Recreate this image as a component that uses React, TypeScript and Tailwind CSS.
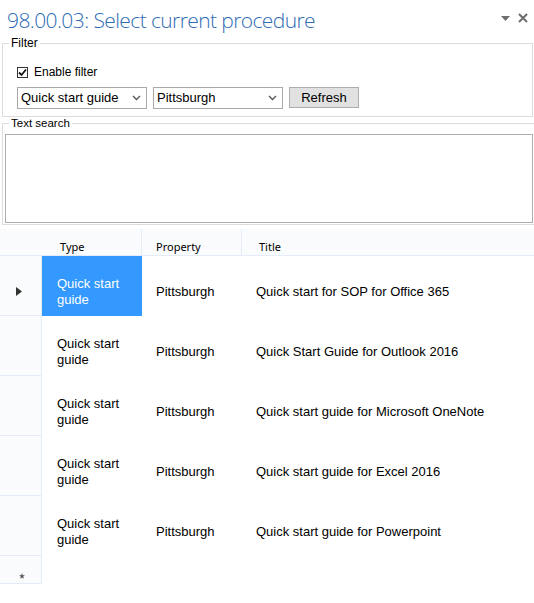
import React from 'react';

const rows = [
  { type: 'Quick start guide', property: 'Pittsburgh', title: 'Quick start for SOP for Office 365' },
  { type: 'Quick start guide', property: 'Pittsburgh', title: 'Quick Start Guide for Outlook 2016' },
  { type: 'Quick start guide', property: 'Pittsburgh', title: 'Quick start guide for Microsoft OneNote' },
  { type: 'Quick start guide', property: 'Pittsburgh', title: 'Quick start guide for Excel 2016' },
  { type: 'Quick start guide', property: 'Pittsburgh', title: 'Quick start guide for Powerpoint' },
];

function Chevron() {
  return (
    <svg width="9" height="6" viewBox="0 0 9 6" className="shrink-0">
      <path d="M1 1 L4.5 4.5 L8 1" fill="none" stroke="#555" strokeWidth="1.3" />
    </svg>
  );
}

function Combo({ value, width }: { value: string; width: string }) {
  return (
    <div className={`${width} h-[22px] border border-[#a9a9a9] bg-white flex items-center justify-between pl-[3px] pr-[5px]`}>
      <span className="text-[13px] text-black">{value}</span>
      <Chevron />
    </div>
  );
}

export default function App() {
  return (
    <div className="w-[534px] h-[603px] bg-white overflow-hidden font-['Liberation_Sans',Arial,sans-serif]">
      {/* title bar */}
      <div className="h-[37px] flex items-start justify-between pl-[7px] pr-[6px] pt-[6px]">
        <h1 className="text-[21px] leading-[28px] text-[#2f6cb4] font-['Open_Sans',sans-serif] font-light tracking-[-0.6px]">
          98.00.03: Select current procedure
        </h1>
        <div className="flex items-center gap-[8px] pt-[7px]">
          <svg width="9" height="5" viewBox="0 0 9 5">
            <path d="M0 0 H9 L4.5 5 Z" fill="#6e6e6e" />
          </svg>
          <svg width="10" height="10" viewBox="0 0 10 10">
            <path d="M1 1 L9 9 M9 1 L1 9" stroke="#6e6e6e" strokeWidth="2" />
          </svg>
        </div>
      </div>

      {/* filter group */}
      <fieldset className="ml-[2px] mr-[1px] h-[80px] border border-[#dcdcdc] p-0">
        <legend className="ml-[6px] px-[2px] text-[12px] leading-[12px] text-black">Filter</legend>
        <div className="pl-[14px] pt-[16px]">
          <div className="flex items-center gap-[6px] h-[14px]">
            <div className="w-[11px] h-[11px] border border-[#333] bg-white flex items-center justify-center">
              <svg width="9" height="9" viewBox="0 0 9 9">
                <path d="M1 4.5 L3.5 7 L8 1.5" fill="none" stroke="#111" strokeWidth="1.8" />
              </svg>
            </div>
            <span className="text-[12px] text-black">Enable filter</span>
          </div>
          <div className="flex items-start mt-[8px] gap-[6px]">
            <Combo value="Quick start guide" width="w-[130px]" />
            <Combo value="Pittsburgh" width="w-[130px]" />
            <button className="w-[70px] h-[21px] bg-[#e1e1e1] border border-[#adadad] text-[13px] text-black leading-none">
              Refresh
            </button>
          </div>
        </div>
      </fieldset>

      {/* text search group */}
      <fieldset className="ml-[2px] h-[108px] border border-[#dcdcdc] border-r-0 p-0">
        <legend className="ml-[6px] px-[2px] text-[11.5px] leading-[12px] text-black">Text search</legend>
        <div className="pl-[2px] pt-[5px]">
          <div className="w-[528px] h-[89px] border border-[#abadb3] bg-white" />
        </div>
      </fieldset>

      {/* grid */}
      <div className="mt-[4px] font-['Noto_Sans',sans-serif]">
        <div className="flex h-[27px] bg-[#fafbfc] border-b border-[#e4ecf7] text-[11px] text-black">
          <div className="w-[42px]" />
          <div className="w-[100px] border-r border-[#e4ecf7] flex items-end pl-[18px]">Type</div>
          <div className="w-[100px] border-r border-[#e4ecf7] flex items-end pl-[14px]">Property</div>
          <div className="flex-1 flex items-end pl-[17px]">Title</div>
        </div>
        {rows.map((r, i) => (
          <div key={i} className="flex h-[60px] font-['Liberation_Sans',Arial,sans-serif] text-[13px] text-black">
            <div className="w-[42px] bg-[#fafbfc] border-r border-b border-[#e4ecf7] flex items-center pl-[16px] pt-[11px]">
              {i === 0 && (
                <svg width="6" height="9" viewBox="0 0 6 9">
                  <path d="M0 0 L6 4.5 L0 9 Z" fill="#333" />
                </svg>
              )}
            </div>
            <div className={`w-[100px] flex items-center pl-[15px] pr-[8px] pt-[11px] leading-[16px] ${i === 0 ? 'bg-[#3399ff] text-white' : ''}`}>
              {r.type}
            </div>
            <div className="w-[100px] flex items-center pl-[14px] pt-[11px]">{r.property}</div>
            <div className="flex-1 flex items-center pl-[14px] pt-[11px]">{r.title}</div>
          </div>
        ))}
        <div className="flex h-[28px]">
          <div className="w-[42px] bg-[#fafbfc] border-r border-b border-[#e4ecf7] flex items-center justify-center pt-[12px] pl-[2px]">
            <svg width="6" height="6" viewBox="0 0 10 10">
              <path d="M5 0 L6.2 3.6 L10 3.6 L7 5.9 L8.1 9.5 L5 7.3 L1.9 9.5 L3 5.9 L0 3.6 L3.8 3.6 Z" fill="#555" />
            </svg>
          </div>
        </div>
      </div>
    </div>
  );
}
